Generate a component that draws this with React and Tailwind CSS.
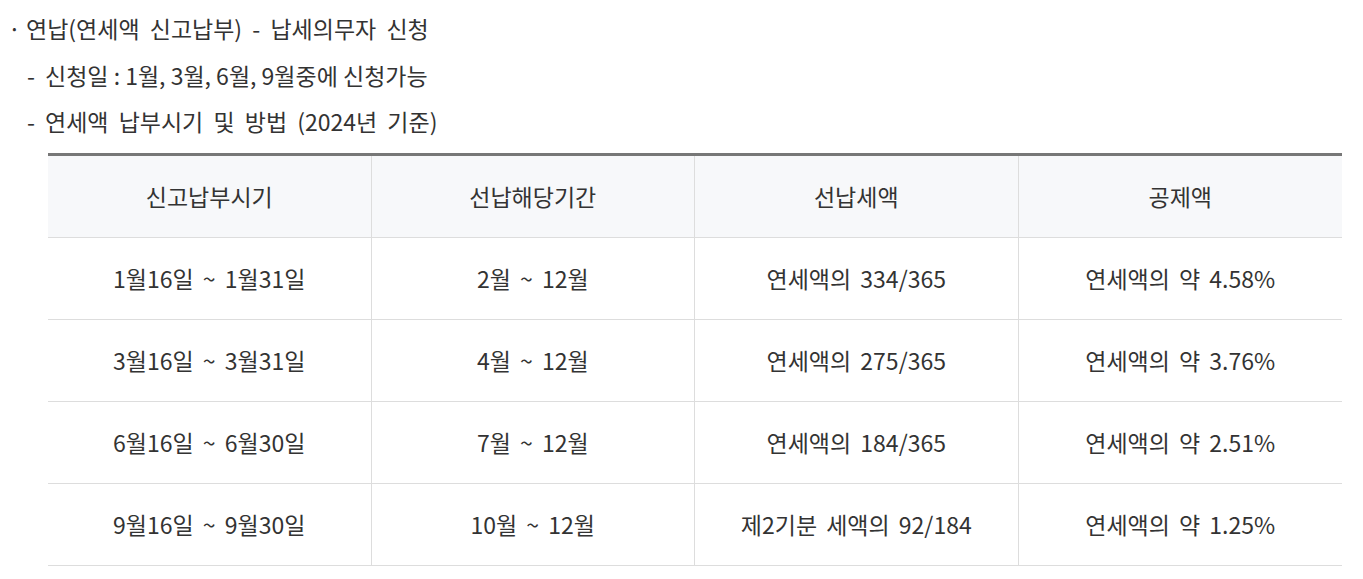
import React from "react";

const rows = [
  ["1월16일 ~ 1월31일", "2월 ~ 12월", "연세액의 334/365", "연세액의 약 4.58%"],
  ["3월16일 ~ 3월31일", "4월 ~ 12월", "연세액의 275/365", "연세액의 약 3.76%"],
  ["6월16일 ~ 6월30일", "7월 ~ 12월", "연세액의 184/365", "연세액의 약 2.51%"],
  ["9월16일 ~ 9월30일", "10월 ~ 12월", "제2기분 세액의 92/184", "연세액의 약 1.25%"],
];

const head = ["신고납부시기", "선납해당기간", "선납세액", "공제액"];

export default function App() {
  return (
    <div
      className="bg-white text-[#333] text-[23px]"
      style={{ fontFamily: '"Noto Sans CJK KR", "Noto Sans", sans-serif' }}
    >
      <div className="pt-[11px]">
        <div className="flex h-[35px] items-center">
          <span className="w-[26px] pl-[8px]">·</span>
          <span className="[word-spacing:5px]">연납(연세액 신고납부) - 납세의무자 신청</span>
        </div>
        <div className="mt-[12px] flex h-[35px] items-center pl-[27px]">
          <span className="w-[18px]">-</span>
          <span>신청일 : 1월, 3월, 6월, 9월중에 신청가능</span>
        </div>
        <div className="mt-[11px] flex h-[35px] items-center pl-[27px]">
          <span className="w-[18px]">-</span>
          <span className="[word-spacing:5px]">연세액 납부시기 및 방법 (2024년 기준)</span>
        </div>
      </div>

      <div className="ml-[48px] mr-[21px] mt-[14px] border-t-[3px] border-[#777] [word-spacing:4px]">
        <div className="grid grid-cols-4 bg-[#f7f8fa] border-b border-[#ddd]">
          {head.map((h, i) => (
            <div
              key={h}
              className={`flex h-[81px] items-center justify-center ${i < 3 ? "border-r border-[#ddd]" : ""}`}
            >
              {h}
            </div>
          ))}
        </div>
        {rows.map((r, ri) => (
          <div key={ri} className="grid grid-cols-4 border-b border-[#ddd]">
            {r.map((c, i) => (
              <div
                key={i}
                className={`flex h-[81px] items-center justify-center ${i < 3 ? "border-r border-[#ddd]" : ""}`}
              >
                {c}
              </div>
            ))}
          </div>
        ))}
      </div>
    </div>
  );
}
